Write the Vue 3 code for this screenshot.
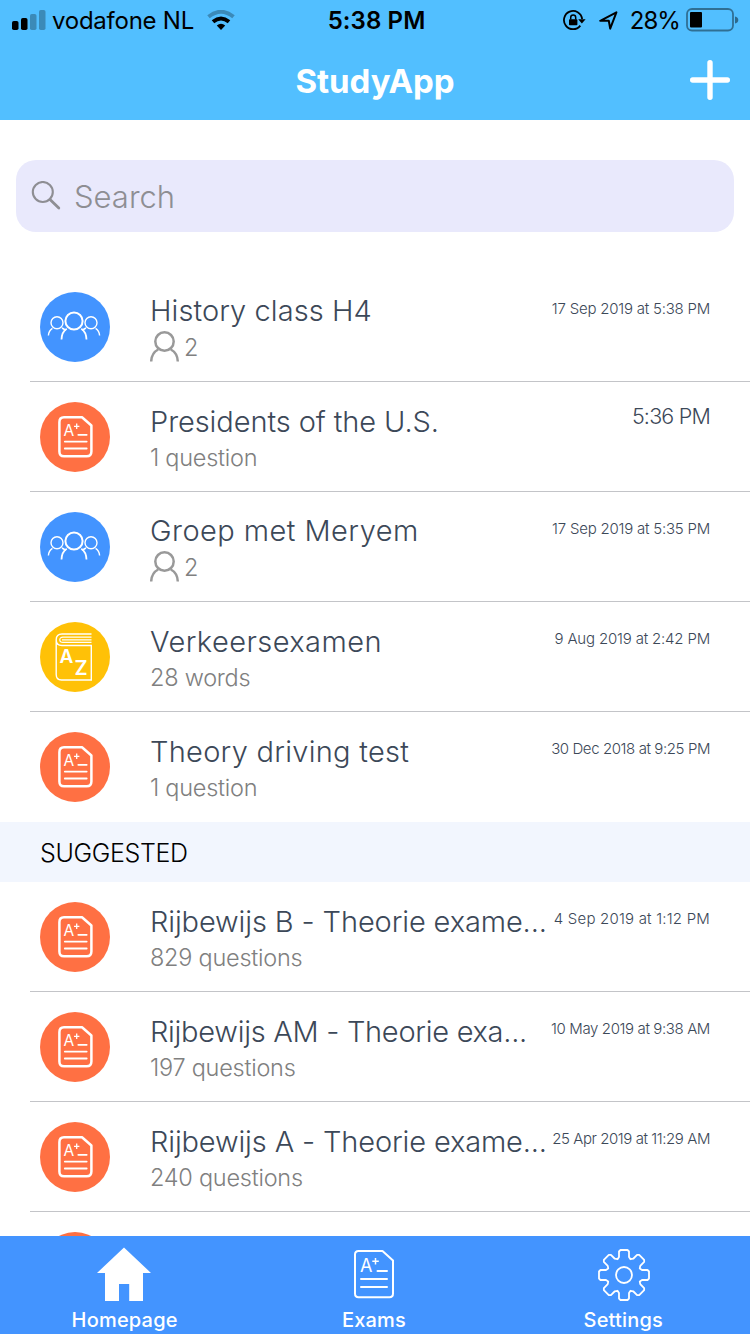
<template>
  <div class="app">
    <header class="header">
      <div class="status-bar">
        <div class="status-left">
          <svg class="signal" width="34" height="20" viewBox="0 0 34 20">
            <rect x="0" y="11" width="6.5" height="9" rx="1.8" />
            <rect x="9" y="8" width="6.5" height="12" rx="1.8" />
            <rect x="18" y="4" width="6.5" height="16" rx="1.8" opacity="0.28" />
            <rect x="27" y="0" width="6.5" height="20" rx="1.8" opacity="0.28" />
          </svg>
          <span class="carrier">vodafone NL</span>
          <svg class="wifi" width="28" height="20" viewBox="0 0 28 20" fill="none" stroke="#000">
            <path d="M1.5 6.8Q14 -3.2 26.5 6.8" stroke-width="4" opacity="0.28" />
            <path d="M6 11.7Q14 5.3 22 11.7" stroke-width="4" />
            <path d="M9.8 15.5Q14 12 18.2 15.5L14 20Z" fill="#000" stroke="none" />
          </svg>
        </div>
        <span class="clock">5:38 PM</span>
        <div class="status-right">
          <svg width="23" height="21" viewBox="0 0 23 21" fill="none" stroke="#000" stroke-width="1.8">
            <path d="M17.3 15.6A9.1 9.1 0 1 1 19.1 9" />
            <path d="M15.2 9.2H22.6L18.9 13.6Z" fill="#000" stroke="none" />
            <rect x="6" y="9.3" width="8.4" height="6" rx="0.8" fill="#000" stroke="none" />
            <path d="M7.7 9.5V7.6A2.5 2.5 0 0 1 12.7 7.6V9.5" stroke-width="1.5" />
          </svg>
          <svg class="location" width="19" height="19" viewBox="0 0 19 19" fill="none" stroke="#000" stroke-width="2" stroke-linejoin="round">
            <path d="M1.2 9.8L17.4 1.3L11.2 17.6L9.8 9.8Z" />
          </svg>
          <span class="percent">28%</span>
          <svg class="battery" width="53" height="24" viewBox="0 0 53 24">
            <rect x="1" y="1" width="46" height="21.5" rx="5" fill="none" stroke="#000" stroke-width="1.8" opacity="0.42" />
            <rect x="4" y="4" width="12" height="15.5" rx="1" />
            <path d="M49 8.5Q52.3 9.2 52.3 12T49 15.5Z" opacity="0.45" />
          </svg>
        </div>
      </div>
      <div class="nav-bar">
        <h1 class="app-title">StudyApp</h1>
        <button class="add-btn" aria-label="Add">
          <svg width="40" height="40" viewBox="0 0 40 40" stroke="#fff" stroke-width="5.4" stroke-linecap="round">
            <path d="M20 2.7V37.3M2.7 20H37.3" />
          </svg>
        </button>
      </div>
    </header>

    <main class="content">
      <div class="search">
        <svg width="30" height="30" viewBox="0 0 30 30" fill="none" stroke="#8e8e93" stroke-width="2.1" stroke-linecap="round">
          <circle cx="11.8" cy="11" r="10" />
          <path d="M19 18.5L27.8 27" stroke-width="2.8" />
        </svg>
        <span class="search-text">Search</span>
      </div>

      <section v-for="section in sections" :key="section.id">
        <h2 v-if="section.title" class="section-title">{{ section.title }}</h2>
        <div v-for="item in section.items" :key="item.title" class="row">
          <div class="avatar" :class="item.type">
            <svg v-if="item.type === 'group'" width="54" height="30" viewBox="0 0 54 30" fill="none" stroke="#fff" stroke-width="1.4">
              <circle cx="27" cy="10" r="8.6" stroke-width="2" />
              <path d="M14.5 28.5Q14.7 21 19.7 17.7M39.5 28.5Q39.3 21 34.3 17.7" stroke-width="1.8" />
              <circle cx="10" cy="11.7" r="6" />
              <circle cx="44" cy="11.7" r="6" />
              <path d="M1.4 24.5Q1.7 19.7 5.4 17.3M15 17Q17.5 18.2 18.6 19.7M52.6 24.5Q52.3 19.7 48.6 17.3M39 17Q36.5 18.2 35.4 19.7" />
            </svg>
            <svg v-else-if="item.type === 'words'" width="38" height="48" viewBox="0 0 38 48" fill="none" stroke="#fff" stroke-width="1.4">
              <path d="M36.5 1H7Q1.2 1 1.2 6.8V41.5Q1.2 47 6.5 47H36.3V12.5H7Q1.2 12.5 1.2 7" />
              <path d="M36.5 4.2H8Q4.8 4.2 4.8 6.8T8 9.4H36.5M7 6.8H36.5" stroke-width="1.2" />
              <text x="4.5" y="29.5" font-size="19">A</text>
              <text x="19.5" y="42" font-size="20">Z</text>
            </svg>
            <svg v-else-if="item.type === 'exam'" class="exam-icon" width="35" height="42" viewBox="0 0 35 42" fill="none" stroke="#fff" stroke-width="2.5" stroke-linejoin="round">
              <path d="M6 1.3H24L33.4 9.5V35.5Q33.4 40.3 28.7 40.3H6Q1.4 40.3 1.4 35.5V6.2Q1.4 1.3 6 1.3Z" />
              <path d="M20.3 18.8H28.7M6.8 25.6H28.7M6.8 32.5H28.7" stroke-width="1.8" stroke-linecap="round" />
              <path d="M16 10.3H21.4M18.7 7.6V13" stroke-width="1.3" />
              <text x="5.6" y="19.5" font-size="15.5">A</text>
            </svg>
          </div>
          <div class="row-body" :class="{ 'group-body': item.members }">
            <div class="row-title"><span :style="{ letterSpacing: item.spacing + 'px' }">{{ item.title }}</span></div>
            <div v-if="item.members" class="row-sub members">
              <svg width="30" height="31" viewBox="0 0 30 31" fill="none" stroke="#999" stroke-width="2.5">
                <circle cx="14.5" cy="10.5" r="9.2" />
                <path d="M1.2 30.5Q1.5 22 8.2 18.5M27.8 30.5Q27.5 22 20.8 18.5" />
              </svg>
              <span>{{ item.members }}</span>
            </div>
            <div v-else class="row-sub">{{ item.sub }}</div>
          </div>
          <time class="row-date" :class="{ today: item.today }" :style="{ letterSpacing: item.dateSpacing + 'px' }">{{ item.date }}</time>
        </div>
      </section>
    </main>

    <nav class="tab-bar">
      <a class="tab">
        <svg width="54" height="54" viewBox="0 0 54 54" fill="#fff">
          <path d="M26 0.5L53 26H45V54H31.2V37H21V54H7V26H-1Z" />
        </svg>
        <span>Homepage</span>
      </a>
      <a class="tab">
        <svg class="exam-icon" width="40" height="54" viewBox="0 0 40 54" fill="none" stroke="#fff" stroke-width="2" stroke-linejoin="round">
          <path d="M4.5 4H28.5L39 13.5V46.5Q39 50.3 35.5 50.3H4.5Q1 50.3 1 46.5V7.5Q1 4 4.5 4Z" />
          <path d="M23.5 24H33M7 32H33M7 40H33" stroke-linecap="round" />
          <path d="M18.3 14.3H24.8M21.5 11V17.6" stroke-width="1.5" />
          <text x="6" y="24.5" font-size="18">A</text>
        </svg>
        <span>Exams</span>
      </a>
      <a class="tab">
        <svg width="54" height="54" viewBox="-28 -28 54 54" fill="none" stroke="#fff" stroke-width="1.8" stroke-linejoin="round">
          <path :d="gearPath" />
          <circle r="8" />
        </svg>
        <span>Settings</span>
      </a>
    </nav>
  </div>
</template>

<script setup>
const sections = [
  {
    id: 'recent',
    items: [
      { type: 'group', title: 'History class H4', members: 2, date: '17 Sep 2019 at 5:38 PM', spacing: 0.07, dateSpacing: -0.22 },
      { type: 'exam', title: 'Presidents of the U.S.', sub: '1 question', date: '5:36 PM', today: true, spacing: -0.08, dateSpacing: -0.8 },
      { type: 'group', title: 'Groep met Meryem', members: 2, date: '17 Sep 2019 at 5:35 PM', spacing: 0.45, dateSpacing: -0.22 },
      { type: 'words', title: 'Verkeersexamen', sub: '28 words', date: '9 Aug 2019 at 2:42 PM', spacing: 0.43, dateSpacing: -0.18 },
      { type: 'exam', title: 'Theory driving test', sub: '1 question', date: '30 Dec 2018 at 9:25 PM', spacing: 0.27, dateSpacing: -0.41 }
    ]
  },
  {
    id: 'suggested',
    title: 'SUGGESTED',
    items: [
      { type: 'exam', title: 'Rijbewijs B - Theorie exame...', sub: '829 questions', date: '4 Sep 2019 at 1:12 PM', spacing: -0.12, dateSpacing: 0.2 },
      { type: 'exam', title: 'Rijbewijs AM - Theorie exa...', sub: '197 questions', date: '10 May 2019 at 9:38 AM', spacing: -0.28, dateSpacing: -0.38 },
      { type: 'exam', title: 'Rijbewijs A - Theorie exame...', sub: '240 questions', date: '25 Apr 2019 at 11:29 AM', spacing: -0.14, dateSpacing: -0.43 },
      { type: 'exam next', title: '', sub: '', date: '', spacing: 0, dateSpacing: 0 }
    ]
  }
]

// one tooth, repeated around the wheel
const tooth = [[-6.5, -15.8], [-5, -18], [-5, -23.5], [-3.5, -25], [3.5, -25], [5, -23.5], [5, -18], [6.5, -15.8]]
const points = []
for (let i = 0; i < 8; i++) {
  const a = (i * Math.PI) / 4
  for (const [x, y] of tooth) {
    points.push(`${(x * Math.cos(a) - y * Math.sin(a)).toFixed(2)} ${(x * Math.sin(a) + y * Math.cos(a)).toFixed(2)}`)
  }
}
const gearPath = 'M' + points.join('L') + 'Z'
</script>

<style>
body {
  margin: 0;
  overflow: hidden;
}
</style>

<style scoped>
.app {
  height: 1334px;
  display: flex;
  flex-direction: column;
  overflow: hidden;
  background: #fff;
  font-family: Inter, "Liberation Sans", sans-serif;
  font-weight: 300;
}

.header {
  flex: none;
  height: 120px;
  background: #52bfff;
}

.status-bar {
  display: grid;
  grid-template-columns: 1fr auto 1fr;
  align-items: center;
  height: 40px;
  padding: 0 11px 0 12px;
  color: #000;
  font-size: 24px;
  font-weight: 400;
}

.status-left,
.status-right {
  display: flex;
  align-items: center;
}

.status-right {
  justify-content: flex-end;
}

.carrier {
  margin: 0 13px 0 6px;
  letter-spacing: -0.25px;
}

.clock {
  margin-left: 2px;
  font-weight: 600;
  letter-spacing: 0.1px;
}

.location {
  margin: 0 12px 0 13px;
}

.percent {
  letter-spacing: -0.9px;
}

.battery {
  margin-left: 6px;
}

.nav-bar {
  display: grid;
  grid-template-columns: 1fr auto 1fr;
  align-items: center;
  height: 80px;
  padding: 0 20px;
}

.app-title {
  grid-column: 2;
  margin: 2px 0 0;
  color: #fff;
  font-size: 33px;
  font-weight: 700;
}

.add-btn {
  justify-self: end;
  height: 40px;
  padding: 0;
  border: none;
  background: none;
}

.content {
  flex: 1;
  min-height: 0;
  overflow: hidden;
}

.search {
  display: flex;
  align-items: center;
  gap: 13px;
  height: 72px;
  margin: 40px 16px;
  padding: 0 15px;
  box-sizing: border-box;
  border-radius: 20px;
  background: #e9e9fc;
}

.search-text {
  color: #8e8e93;
  font-size: 31px;
}

.section-title {
  height: 60px;
  margin: 0;
  padding-left: 40px;
  background: #f2f6fe;
  color: #000;
  font-size: 25px;
  font-weight: 300;
  letter-spacing: -0.35px;
  line-height: 62px;
}

.row {
  display: flex;
  height: 110px;
  margin-left: 30px;
  padding: 20px 40px 0 10px;
  box-sizing: border-box;
  border-bottom: 1px solid #c3c4c8;
}

.row:last-child {
  border-bottom: none;
}

.avatar {
  display: flex;
  flex: none;
  align-items: center;
  justify-content: center;
  width: 70px;
  height: 70px;
  border-radius: 50%;
}

.avatar.group {
  background: #4394ff;
}

.avatar.group svg {
  margin: 0 2px 2px 0;
}

.avatar.exam {
  background: #ff7043;
}

.avatar.exam svg {
  margin-left: 1px;
}

.avatar.words {
  background: #ffc107;
}

.avatar.words svg {
  margin-right: 2px;
}

.avatar text {
  fill: #fff;
  stroke: none;
  font-weight: 600;
}

.avatar .exam-icon text,
.exam-icon text {
  fill: #fff;
  stroke: none;
  font-weight: 400;
}

.row-body {
  flex: 1;
  min-width: 0;
  padding-left: 40px;
}

.row-title {
  height: 40px;
  color: #3c4858;
  font-size: 29px;
  line-height: 40px;
  white-space: nowrap;
}

.group-body .row-title {
  height: 39px;
  line-height: 38px;
}

.row-sub {
  color: #808080;
  font-size: 23.5px;
  letter-spacing: -0.25px;
  line-height: 32px;
}

.members {
  display: flex;
  align-items: center;
  gap: 4px;
}

.members span {
  padding-top: 1px;
}

.members svg {
  margin-bottom: 2px;
}

.row-date {
  flex: none;
  color: #3c4858;
  font-size: 15px;
  line-height: 34px;
}

.row-date.today {
  font-size: 21.5px;
  line-height: 29px;
}

.tab-bar {
  display: flex;
  flex: none;
  height: 98px;
  padding-right: 2px;
  box-sizing: border-box;
  background: #4394ff;
}

.tab svg {
  overflow: visible;
}

.tab {
  display: flex;
  flex: 1;
  flex-direction: column;
  align-items: center;
  gap: 6px;
  padding-top: 11px;
  box-sizing: border-box;
  color: #fff;
  font-size: 20px;
  font-weight: 500;
  letter-spacing: 0.2px;
  line-height: 26px;
}
</style>
